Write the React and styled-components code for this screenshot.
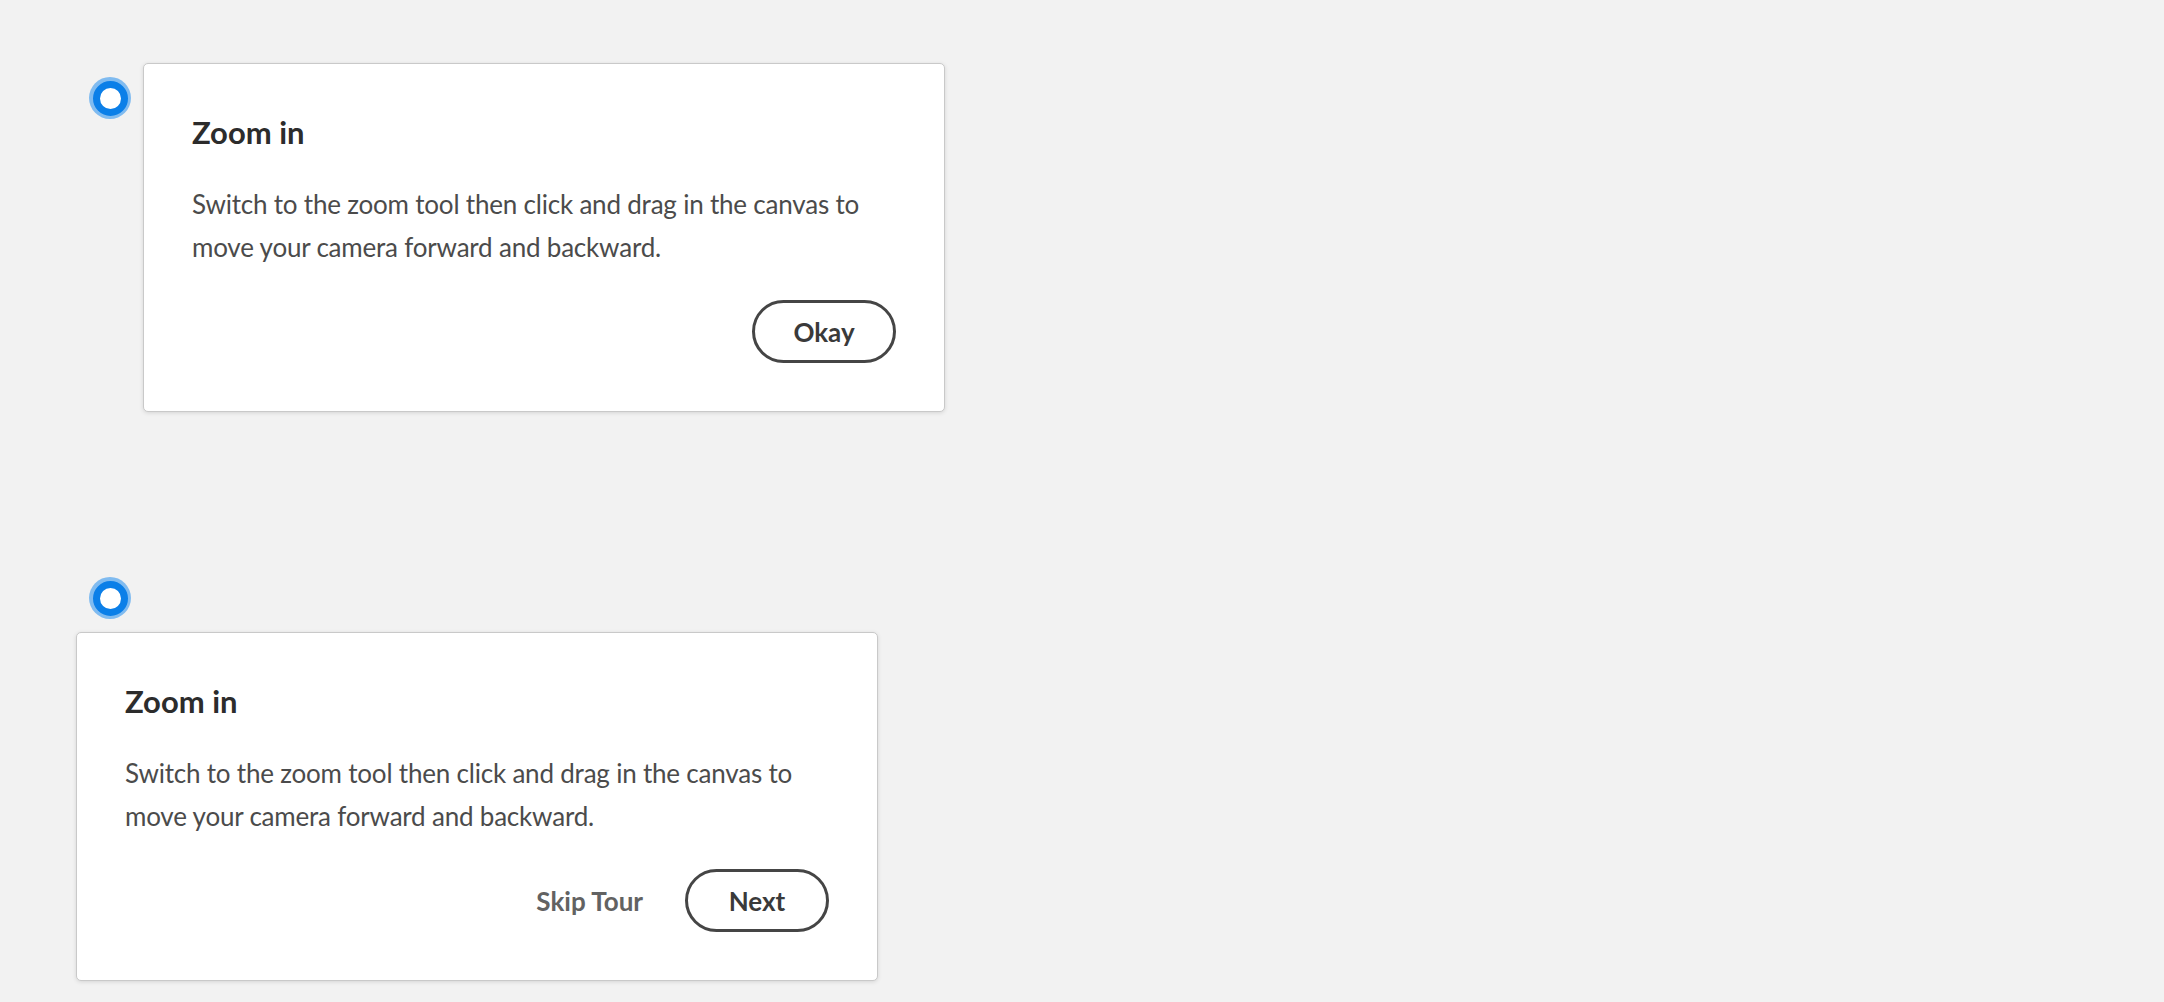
import React from "react";
import styled, { createGlobalStyle } from "styled-components";

const GlobalStyle = createGlobalStyle`
  html, body {
    margin: 0;
    padding: 0;
    background: #f2f2f2;
  }
  body {
    font-family: Lato, "Open Sans", sans-serif;
    -webkit-font-smoothing: antialiased;
  }
  * { box-sizing: border-box; }
`;

const Page = styled.main`
  min-height: 100vh;
  padding: 63px 0 0 76px;
  display: flex;
  flex-direction: column;
  align-items: flex-start;
`;

const SideExample = styled.section`
  display: flex;
  align-items: flex-start;
  gap: 12px;
  margin-left: 13px;
`;

const TopExample = styled.section`
  display: flex;
  flex-direction: column;
  align-items: flex-start;
  gap: 13px;
  margin-top: 165px;
`;

const Beacon = styled.span`
  flex-shrink: 0;
  width: 42px;
  height: 42px;
  border-radius: 50%;
  background: #80bbf0;
  display: grid;
  place-items: center;
  margin-top: ${(p) => p.$offsetTop || 0}px;
  margin-left: ${(p) => p.$offsetLeft || 0}px;
`;

const BeaconRing = styled.span`
  width: 35px;
  height: 35px;
  border-radius: 50%;
  border: 7px solid #0b7fe8;
  background: #ffffff;
`;

const Card = styled.div`
  width: 802px;
  height: 349px;
  background: #ffffff;
  border: 1px solid #c9c9c9;
  border-radius: 5px;
  box-shadow: 0 1px 4px rgba(0, 0, 0, 0.12);
  padding: 48px;
  display: flex;
  flex-direction: column;
`;

const Title = styled.h2`
  margin: 0;
  font-size: 31px;
  line-height: 40px;
  font-weight: 700;
  color: #2c2c2c;
`;

const Body = styled.p`
  margin: 31px 0 0;
  font-size: 26px;
  letter-spacing: -0.2px;
  line-height: 42.5px;
  font-weight: 400;
  color: #4b4b4b;
  white-space: nowrap;
`;

const Actions = styled.div`
  margin-top: auto;
  display: flex;
  justify-content: flex-end;
  align-items: center;
  gap: 39px;
`;

const Button = styled.button`
  font-family: inherit;
  font-size: 26px;
  font-weight: 700;
  height: 63px;
  min-width: ${(p) => (p.$quiet ? "0" : "144px")};
  padding: ${(p) => (p.$quiet ? "0" : "0 28px")};
  border-radius: 32px;
  border: 3px solid ${(p) => (p.$quiet ? "transparent" : "#454545")};
  background: transparent;
  color: ${(p) => (p.$quiet ? "#626262" : "#3a3a3a")};
  cursor: pointer;
  display: inline-flex;
  align-items: center;
  justify-content: center;
`;

const TourCard = ({ children }) => (
  <Card>
    <Title>Zoom in</Title>
    <Body>
      Switch to the zoom tool then click and drag in the canvas to
      <br />
      move your camera forward and backward.
    </Body>
    <Actions>{children}</Actions>
  </Card>
);

export default function App() {
  return (
    <>
      <GlobalStyle />
      <Page>
        <SideExample>
          <Beacon $offsetTop={14}>
            <BeaconRing />
          </Beacon>
          <TourCard>
            <Button>Okay</Button>
          </TourCard>
        </SideExample>
        <TopExample>
          <Beacon $offsetLeft={13}>
            <BeaconRing />
          </Beacon>
          <TourCard>
            <Button $quiet>Skip Tour</Button>
            <Button>Next</Button>
          </TourCard>
        </TopExample>
      </Page>
    </>
  );
}
